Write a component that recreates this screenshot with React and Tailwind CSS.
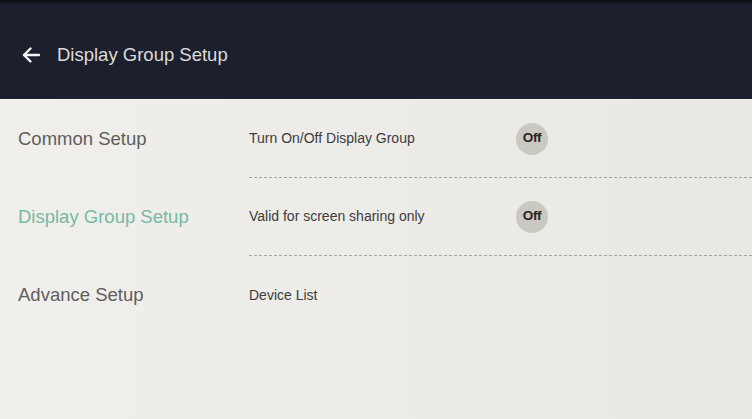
import React from "react";

const font = { fontFamily: '"Liberation Sans", Arial, sans-serif' };

function Arrow() {
  return (
    <svg width="20" height="18" viewBox="0 0 20 18" fill="none" stroke="#f2f2f2" strokeWidth="2.4" strokeLinecap="round" strokeLinejoin="round">
      <path d="M18 9H3" />
      <path d="M9.5 2.5L3 9l6.5 6.5" />
    </svg>
  );
}

function OffBadge() {
  return (
    <div className="w-[32px] h-[32px] rounded-full bg-[#c9c8c1] flex items-center justify-center text-[13.5px] font-semibold text-[#262626] tracking-[-0.3px]">
      Off
    </div>
  );
}

function Row({ label, active, text, toggle, border = true }) {
  return (
    <div className="flex h-[78px]">
      <div className={`w-[249px] pl-[18px] flex items-center text-[18.5px] ${active ? "text-[#76b9a4]" : "text-[#5e5e5e]"}`}>
        {label}
      </div>
      <div className={`flex-1 flex items-center ${border ? "border-b border-dashed border-[#a5a5a2]" : ""}`}>
        <div className="w-[267px] text-[14px] text-[#3c3c3c]">{text}</div>
        {toggle && <OffBadge />}
      </div>
    </div>
  );
}

export default function App() {
  return (
    <div className="w-[752px] h-[419px] overflow-hidden bg-[#ebeae6]" style={font}>
      <div className="h-[100px] bg-[#1c202c] flex flex-col border-b border-[#f4f3ef]">
        <div className="h-[5px] bg-gradient-to-b from-[#0b0d12] to-[#1c202c]" />
        <div className="flex-1 flex items-center pt-[5px] pl-[21px]">
          <Arrow />
          <span className="ml-[16px] text-[18.5px] text-[#dcdcdc]">Display Group Setup</span>
        </div>
      </div>
      <div className="bg-gradient-to-r from-[#f1efeb] to-[#e9e8e4] h-full">
        <Row label="Common Setup" text="Turn On/Off Display Group" toggle />
        <Row label="Display Group Setup" active text="Valid for screen sharing only" toggle />
        <Row label="Advance Setup" text="Device List" border={false} />
      </div>
    </div>
  );
}
